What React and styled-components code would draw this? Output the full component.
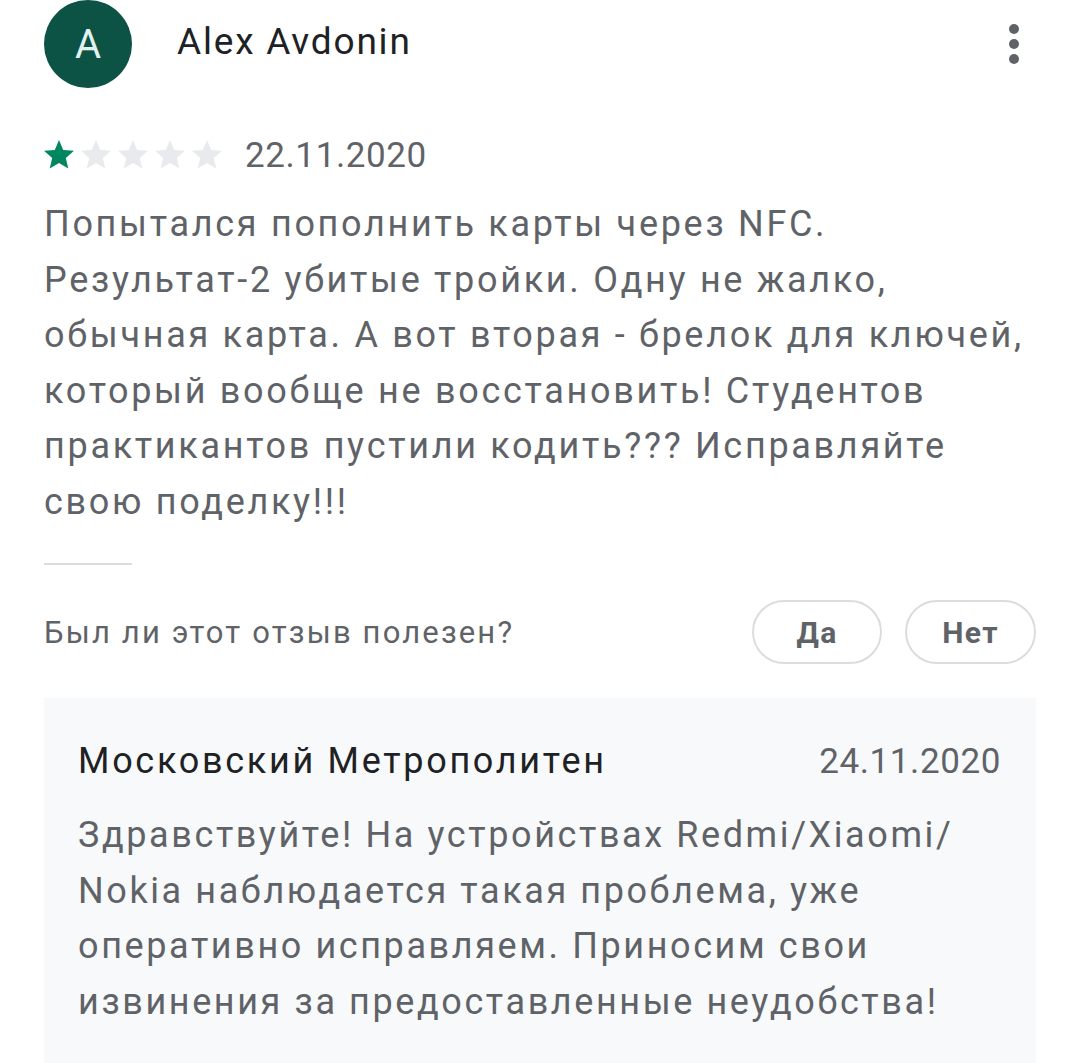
import React from "react";
import styled, { createGlobalStyle } from "styled-components";

const Global = createGlobalStyle`
  html, body { margin: 0; padding: 0; background: #fff; }
  body { font-family: Roboto, "Noto Sans", Arial, sans-serif; -webkit-font-smoothing: antialiased; }
`;

const Page = styled.div`
  width: 1080px;
  height: 1063px;
  overflow: hidden;
  box-sizing: border-box;
  padding: 0 44px;
  display: flex;
  flex-direction: column;
  & > * {
    flex-shrink: 0;
  }
`;

const Header = styled.div`
  display: flex;
  align-items: center;
  height: 88px;
`;

const Avatar = styled.div`
  width: 88px;
  height: 88px;
  border-radius: 50%;
  background: #0c5245;
  color: #e3f1ed;
  display: flex;
  align-items: center;
  justify-content: center;
  font-size: 40px;
  font-weight: 400;
  flex-shrink: 0;
`;

const Name = styled.div`
  margin-left: 45px;
  padding-bottom: 5px;
  font-size: 37px;
  line-height: 43px;
  color: #202124;
  letter-spacing: 1.8px;
  flex: 1;
`;

const Kebab = styled.div`
  display: flex;
  flex-direction: column;
  gap: 5px;
  margin-right: 17px;
  span {
    width: 10px;
    height: 10px;
    border-radius: 50%;
    background: #5f6368;
  }
`;

const Meta = styled.div`
  display: flex;
  align-items: center;
  margin-top: 47px;
  height: 40px;
`;

const Stars = styled.div`
  display: flex;
  gap: 1px;
  margin-left: -3px;
  margin-right: 20px;
`;

const DateText = styled.div`
  font-size: 35px;
  line-height: 41px;
  color: #5f6368;
  letter-spacing: 0.6px;
`;

const Body = styled.p`
  margin: 22px 0 0;
  font-size: 36px;
  line-height: 55.5px;
  color: #5f6368;
  letter-spacing: 2.7px;
  white-space: nowrap;
`;

const Divider = styled.div`
  width: 88px;
  height: 2px;
  background: #dadce0;
  margin-top: 33px;
`;

const Helpful = styled.div`
  display: flex;
  align-items: center;
  margin-top: 35px;
`;

const Question = styled.div`
  flex: 1;
  font-size: 31px;
  color: #5f6368;
  letter-spacing: 2.15px;
`;

const Pill = styled.button`
  height: 64px;
  width: ${(p) => p.w}px;
  margin-left: ${(p) => p.ml || 0}px;
  border: 2px solid #dadce0;
  border-radius: 32px;
  background: #fff;
  font-family: Roboto, Arial, sans-serif;
  font-size: 30px;
  font-weight: 700;
  color: #5f6368;
  letter-spacing: 1.4px;
  padding: 0;
`;

const Reply = styled.div`
  margin-top: 34px;
  background: #f8f9fa;
  padding: 42px 35px 40px 34px;
  flex: 1 0 auto;
`;

const ReplyHead = styled.div`
  display: flex;
  justify-content: space-between;
  align-items: baseline;
`;

const Dev = styled.div`
  font-size: 36px;
  line-height: 42px;
  color: #202124;
  letter-spacing: 2.7px;
`;

const ReplyText = styled.p`
  margin: 26px 0 0;
  font-size: 36px;
  line-height: 55.7px;
  color: #5f6368;
  letter-spacing: 2.6px;
  white-space: nowrap;
`;

const Star = ({ filled }) => (
  <svg width="36" height="36" viewBox="0 0 24 24">
    <path
      d="M12 17.27L18.18 21l-1.64-7.03L22 9.24l-7.19-.61L12 2 9.19 8.63 2 9.24l5.46 4.73L5.82 21z"
      fill={filled ? "#01875f" : "#e8eaed"}
    />
  </svg>
);

const bodyLines = [
  "Попытался пополнить карты через NFC.",
  "Результат-2 убитые тройки. Одну не жалко,",
  "обычная карта. А вот вторая - брелок для ключей,",
  "который вообще не восстановить! Студентов",
  "практикантов пустили кодить??? Исправляйте",
  "свою поделку!!!",
];

const replyLines = [
  "Здравствуйте! На устройствах Redmi/Xiaomi/",
  "Nokia наблюдается такая проблема, уже",
  "оперативно исправляем. Приносим свои",
  "извинения за предоставленные неудобства!",
];

const Lines = ({ lines }) =>
  lines.map((l, i) => (
    <React.Fragment key={i}>
      {l}
      {i < lines.length - 1 && <br />}
    </React.Fragment>
  ));

export default function App() {
  return (
    <>
      <Global />
      <Page>
        <Header>
          <Avatar>A</Avatar>
          <Name>Alex Avdonin</Name>
          <Kebab>
            <span />
            <span />
            <span />
          </Kebab>
        </Header>
        <Meta>
          <Stars>
            {[1, 0, 0, 0, 0].map((f, i) => (
              <Star key={i} filled={f} />
            ))}
          </Stars>
          <DateText>22.11.2020</DateText>
        </Meta>
        <Body>
          <Lines lines={bodyLines} />
        </Body>
        <Divider />
        <Helpful>
          <Question>Был ли этот отзыв полезен?</Question>
          <Pill w={130}>Да</Pill>
          <Pill w={131} ml={23}>Нет</Pill>
        </Helpful>
        <Reply>
          <ReplyHead>
            <Dev>Московский Метрополитен</Dev>
            <DateText>24.11.2020</DateText>
          </ReplyHead>
          <ReplyText>
            <Lines lines={replyLines} />
          </ReplyText>
        </Reply>
      </Page>
    </>
  );
}
